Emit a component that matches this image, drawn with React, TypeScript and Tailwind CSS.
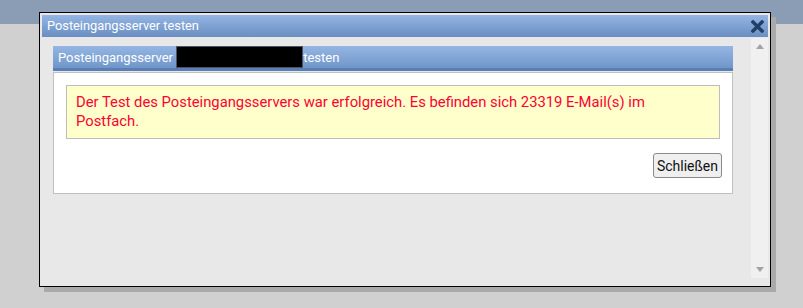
import React from "react";

const font = { fontFamily: "Roboto, 'Liberation Sans', Arial, sans-serif" };

function CloseIcon() {
  return (
    <svg width="13" height="13" viewBox="0 0 13 13" className="block">
      <path d="M2 2 L11 11 M11 2 L2 11" stroke="#1f4167" strokeWidth="3.4" strokeLinecap="square" fill="none" />
    </svg>
  );
}

export default function App() {
  return (
    <div className="relative w-[803px] h-[308px] bg-[#d0d0d0] overflow-hidden" style={font}>
      <div className="h-[24px] bg-[#8b9db5]" />

      <div className="absolute left-[39px] top-[12px] w-[732px] h-[275px] border border-black bg-[#e8e8e8] p-[2px] shadow-[5px_5px_0_#aaaaaa] flex flex-col">
        <div className="h-[22px] shrink-0 flex items-center justify-between pl-[5px] pr-[4px] bg-gradient-to-b from-[#95b6e4] to-[#6a8ec2]">
          <span className="text-[12.8px] text-white leading-none">Posteingangsserver testen</span>
          <CloseIcon />
        </div>

        <div className="flex-1 flex min-h-0">
          <div className="flex-1 pl-[11px] pr-[18px] pt-[9px]">
            <div className="h-[25px] flex items-center pl-[5px] bg-gradient-to-b from-[#95b6e4] to-[#7096c9] border-b-[3px] border-[#5a7fb6]">
              <span className="text-[13px] text-white leading-none">Posteingangsserver&nbsp;</span>
              <span className="w-[127px] h-[22px] bg-black border border-[#4c5566] self-start" />
              <span className="text-[13px] text-white leading-none">testen</span>
            </div>
            <div className="mt-[1px] bg-white border border-[#c0c0c0] h-[122px] px-[12px] pt-[12px] flex flex-col">
              <div className="bg-[#ffffcc] border border-[#bdbdbd] px-[9px] py-[7px] text-[14.8px] leading-[19px] text-[#ff0033]">
                Der Test des Posteingangsservers war erfolgreich. Es befinden sich 23319 E-Mail(s) im Postfach.
              </div>
              <div className="flex justify-end mt-[14px]">
                <button className="h-[25px] px-[3px] mr-[-2px] text-[14px] leading-none text-[#111] bg-[#efefef] border border-[#8a8a8a] rounded-[3px]" style={font}>
                  Schließen
                </button>
              </div>
            </div>
          </div>
          <div className="w-[17px] mt-[1px] mb-[6px] bg-[#f0f0f0] flex flex-col items-center justify-between py-[6px]">
            <svg width="8" height="5" viewBox="0 0 8 5" className="block"><path d="M0 5 L4 0 L8 5 Z" fill="#a3a3a3" /></svg>
            <svg width="8" height="5" viewBox="0 0 8 5" className="block"><path d="M0 0 L8 0 L4 5 Z" fill="#a3a3a3" /></svg>
          </div>
        </div>
      </div>
    </div>
  );
}
